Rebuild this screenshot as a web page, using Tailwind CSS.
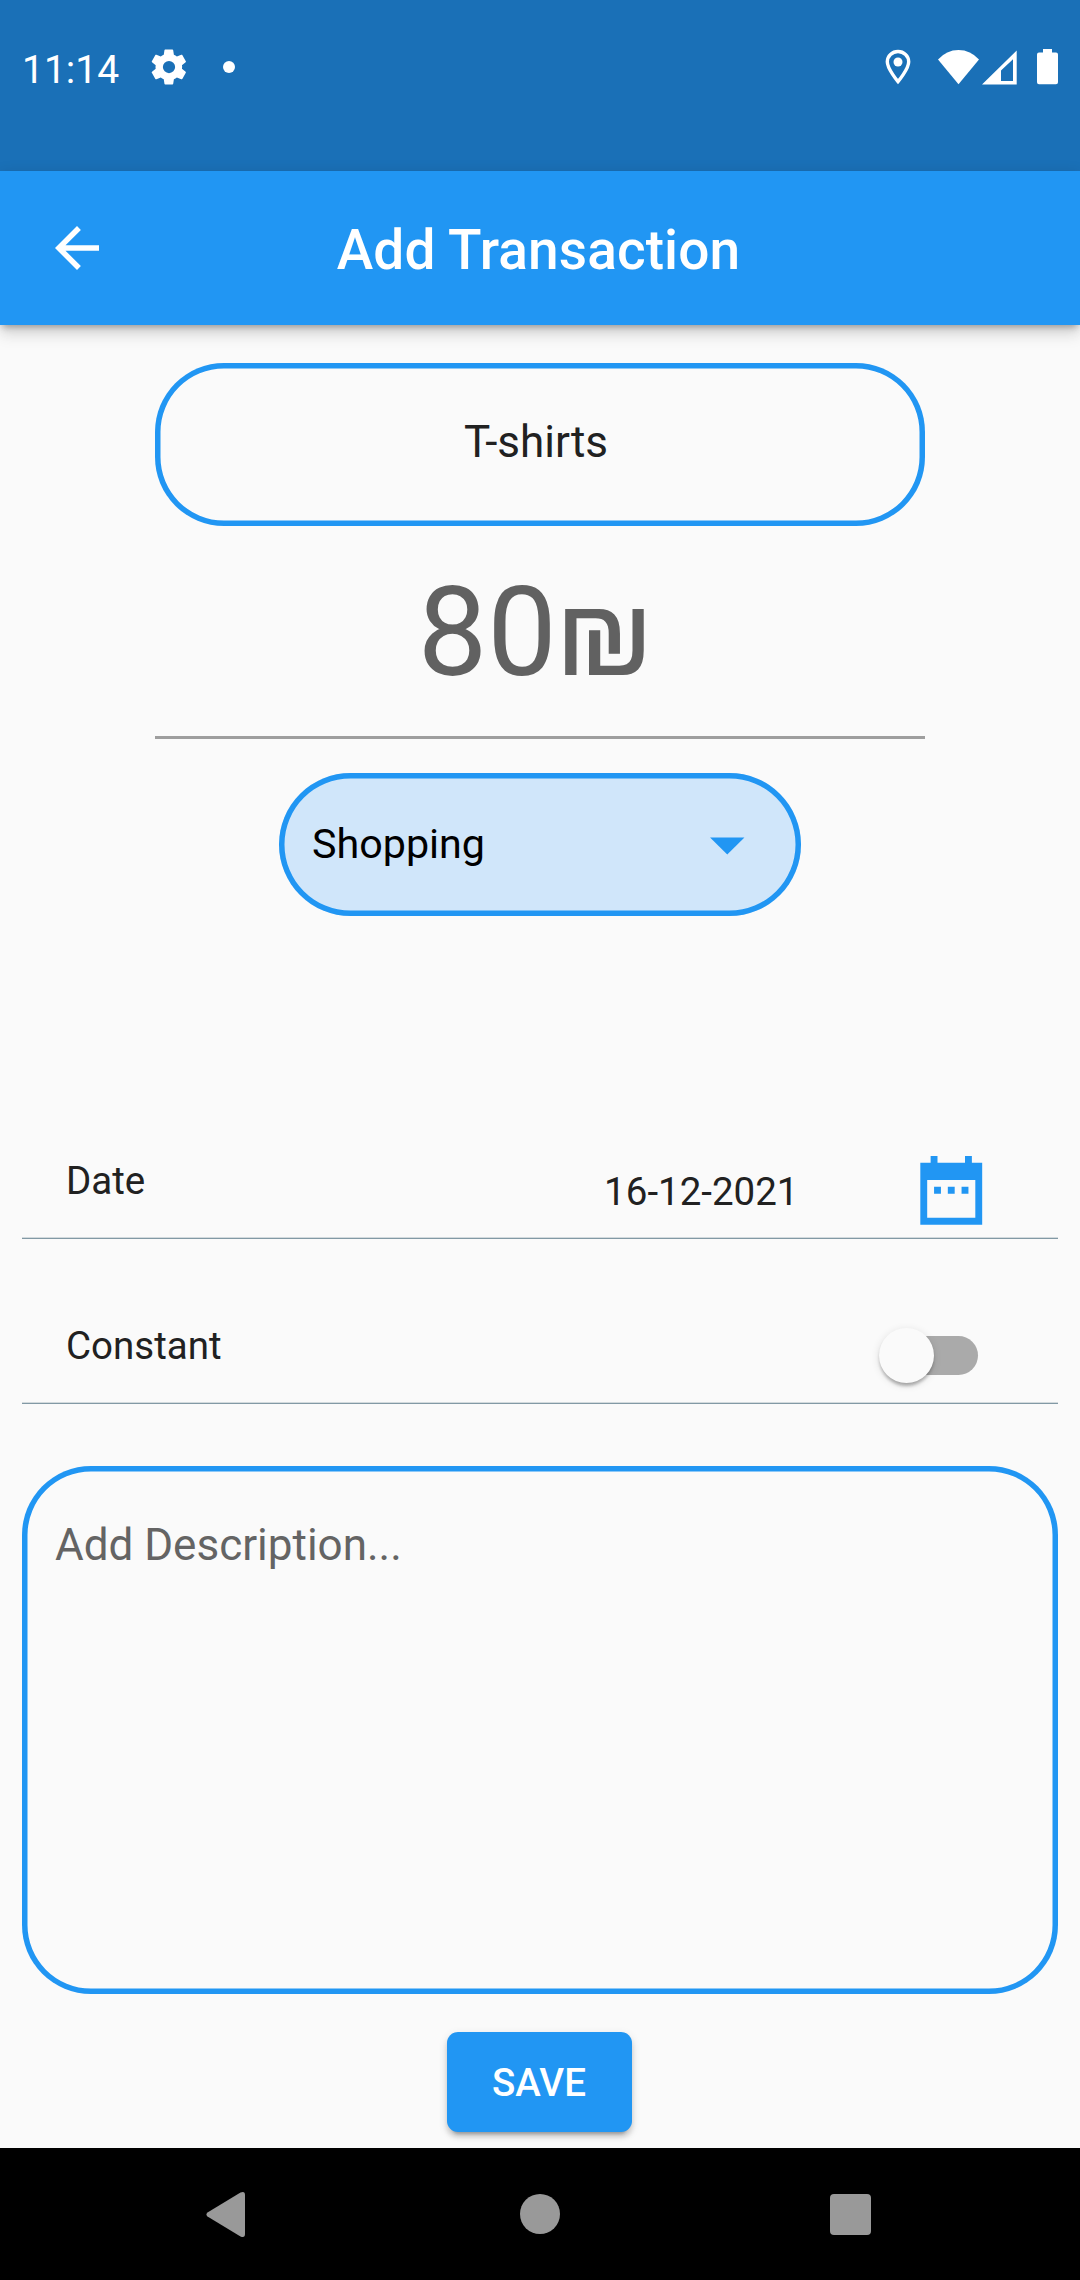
<!DOCTYPE html>
<html lang="en">
<head>
<meta charset="utf-8">
<title>Add Transaction</title>
<script src="https://cdn.jsdelivr.net/npm/@tailwindcss/browser@4"></script>
</head>
<body class="bg-[#fafafa]">
<div class="flex h-[2280px] w-[1080px] flex-col overflow-hidden bg-[#fafafa] font-['Roboto',sans-serif] text-[#212121]">

  <!-- Status bar -->
  <div class="h-[171px] shrink-0 bg-[#1a70b7]">
    <div class="flex h-[134px] items-center pr-[22px] pl-[22px] text-white">
      <span class="w-[128px] pt-[5px] text-[39px] leading-[48px]">11:14</span>
      <svg class="h-[42px] w-[42px] -ml-[2px]" viewBox="0 0 24 24" fill="currentColor"><path d="M19.4 13c0-.3.1-.6.1-1s0-.7-.1-1l2.1-1.7c.2-.1.3-.4.1-.6l-2-3.5c-.1-.2-.4-.3-.6-.2l-2.500 1c-.5-.4-1.100-.7-1.700-1l-.4-2.600c0-.2-.2-.4-.5-.4h-4c-.2 0-.5.2-.5.4l-.4 2.600c-.6.3-1.200.6-1.700 1l-2.500-1c-.2-.1-.5 0-.6.2l-2 3.500c-.1.2-.1.5.1.6l2.100 1.700c0 .3-.1.6-.1 1s0 .7.1 1l-2.100 1.700c-.2.1-.3.4-.1.6l2 3.500c.1.2.4.3.6.2l2.500-1c.5.4 1.100.7 1.700 1l.4 2.600c0 .2.200.4.500.4h4c.2 0 .500-.2.500-.4l.4-2.600c.6-.3 1.200-.6 1.700-1l2.500 1c.2.1.500 0 .6-.2l2-3.500c.1-.2.1-.5-.1-.6zM12 15.500a3.500 3.500 0 1 1 0-7 3.500 3.500 0 0 1 0 7z"/></svg>
      <span class="ml-[33px] h-3 w-3 rounded-full bg-white"></span>
      <svg class="ml-auto h-[36px] w-[26px]" viewBox="0 0 26 36" fill="none"><path d="M13 2.500C7.200 2.500 2.300 7 2.300 12.800 2.300 20 13 32.600 13 32.600S23.700 20 23.700 12.800C23.700 7 18.800 2.500 13 2.500z" stroke="currentColor" stroke-width="3.400"/><circle cx="13" cy="13" r="4.500" fill="currentColor"/></svg>
      <svg class="ml-[27px] h-[36px] w-[41px]" viewBox="0 0 41 36" fill="currentColor"><path d="M0 10.500Q8.500 1 20.500 1T41 10.500L20.500 35.300z"/></svg>
      <svg class="ml-[3px] h-[36px] w-[35px]" viewBox="0 0 35 36" fill="currentColor"><path fill-rule="evenodd" d="M0 35.500 34.700 1.500V35.500zM19 21.600V32H31V10.200z"/></svg>
      <svg class="ml-[20px] h-[36px] w-[21px]" viewBox="0 0 21 36" fill="currentColor"><path d="M6 0h9v3.500h4a2 2 0 0 1 2 2V33.300a2 2 0 0 1-2 2H2a2 2 0 0 1-2-2V5.500a2 2 0 0 1 2-2h4z"/></svg>
    </div>
  </div>

  <!-- App bar -->
  <header class="z-10 grid h-[154px] shrink-0 grid-cols-[154px_1fr_157px] items-center bg-[#2196f3] text-white shadow-[0_5px_6px_-3px_rgba(0,0,0,0.25),0_11px_14px_rgba(0,0,0,0.09),0_3px_14px_rgba(0,0,0,0.13)]">
    <button class="ml-11 h-[66px] w-[66px]" aria-label="Back">
      <svg class="h-[66px] w-[66px]" viewBox="0 0 24 24" fill="currentColor"><path d="M20 11H7.830l5.590-5.590L12 4l-8 8 8 8 1.410-1.410L7.830 13H20v-2z"/></svg>
    </button>
    <h1 class="pt-1 text-center text-[55px] leading-[64px] font-medium tracking-[0.1px]">Add Transaction</h1>
  </header>

  <!-- Form -->
  <main class="flex h-[1823px] shrink-0 flex-col items-center pt-[38px]">
    <div class="flex h-[163px] w-[770px] shrink-0 items-center justify-center rounded-[69px] pr-2 pb-[5px] text-[44px] leading-[52px] shadow-[inset_0_0_0_5.5px_#2196f3]">T-shirts</div>

    <div class="h-[213px] w-[770px] shrink-0 border-b-[3px] border-[#9e9e9e] pt-[34px] pr-[10px] text-center text-[123.750px] leading-[145px] text-[#616161]">80₪</div>

    <div class="mt-[34px] flex h-[143px] w-[522px] shrink-0 items-center justify-between rounded-full bg-[#d0e6fa] pr-[33px] pl-[33px] text-[41.250px] text-black shadow-[inset_0_0_0_5.5px_#2196f3]">
      <span class="pb-[2px] leading-[48px]">Shopping</span>
      <svg class="h-[82.500px] w-[82.500px]" viewBox="0 0 24 24" fill="#2196f3"><path d="M7 10l5 5 5-5z"/></svg>
    </div>

    <div class="mt-[194px] flex h-[129px] w-[1036px] shrink-0 border-b border-[#8299a5] pr-[66px] pl-11 text-[38.500px] leading-[46px] shadow-[inset_0_-1px_0_#d3dadd]">
      <span class="pt-[48px]">Date</span>
      <span class="ml-auto pt-[59px]">16-12-2021</span>
      <svg class="mt-[39px] ml-[111px] h-[82.500px] w-[82.500px]" viewBox="0 0 24 24" fill="#2196f3"><path fill-rule="evenodd" d="M21 4h-3V2h-2v2H8V2H6v2H3v18h18zM19 20H5V9h14zM7 11h2v2H7zM11 11h2v2h-2zM15 11h2v2h-2z"/></svg>
    </div>

    <div class="flex h-[165px] w-[1036px] shrink-0 justify-between border-b border-[#8299a5] pr-[80px] pl-11 text-[38.500px] leading-[46px] shadow-[inset_0_-1px_0_#d3dadd]">
      <span class="pt-[84px]">Constant</span>
      <span class="relative mt-[97px] h-[39px] w-[91px] rounded-full bg-[#aaaaaa]">
        <span class="absolute -top-2 -left-2 h-[55px] w-[55px] rounded-full bg-[#fafafa] shadow-[0_5px_4px_-3px_rgba(0,0,0,0.2),0_3px_3px_rgba(0,0,0,0.14),0_2px_8px_rgba(0,0,0,0.12)]"></span>
      </span>
    </div>

    <div class="mt-[62px] h-[528px] w-[1036px] shrink-0 rounded-[69px] pt-[53px] pl-[33px] text-[44px] leading-[52px] text-[#646464] shadow-[inset_0_0_0_5.5px_#2196f3]">Add Description...</div>

    <button class="mt-[38px] mr-px h-[100px] w-[185px] shrink-0 rounded-[11px] bg-[#2196f3] pt-[2px] pr-px text-[38.500px] leading-[46px] font-medium text-white shadow-[0_8px_3px_-6px_rgba(0,0,0,0.2),0_5px_5px_rgba(0,0,0,0.14),0_3px_10px_rgba(0,0,0,0.12)]">SAVE</button>
  </main>

  <!-- Navigation bar -->
  <nav class="flex h-[132px] shrink-0 items-start bg-black pt-[44px] pl-[206px]">
    <svg class="h-[45px] w-[39px]" viewBox="0 0 39 45" fill="#999999"><path d="M1.500 20.500 34.500.6Q39-1.200 39 3V42Q39 46.200 34.500 44.400L1.500 24.500Q-.6 22.500 1.500 20.500z"/></svg>
    <span class="mt-[2px] ml-[275px] h-10 w-10 rounded-full bg-[#999999]"></span>
    <span class="mt-[2px] ml-[270px] h-[41px] w-[41px] rounded-[4px] bg-[#999999]"></span>
  </nav>
</div>
</body>
</html>
